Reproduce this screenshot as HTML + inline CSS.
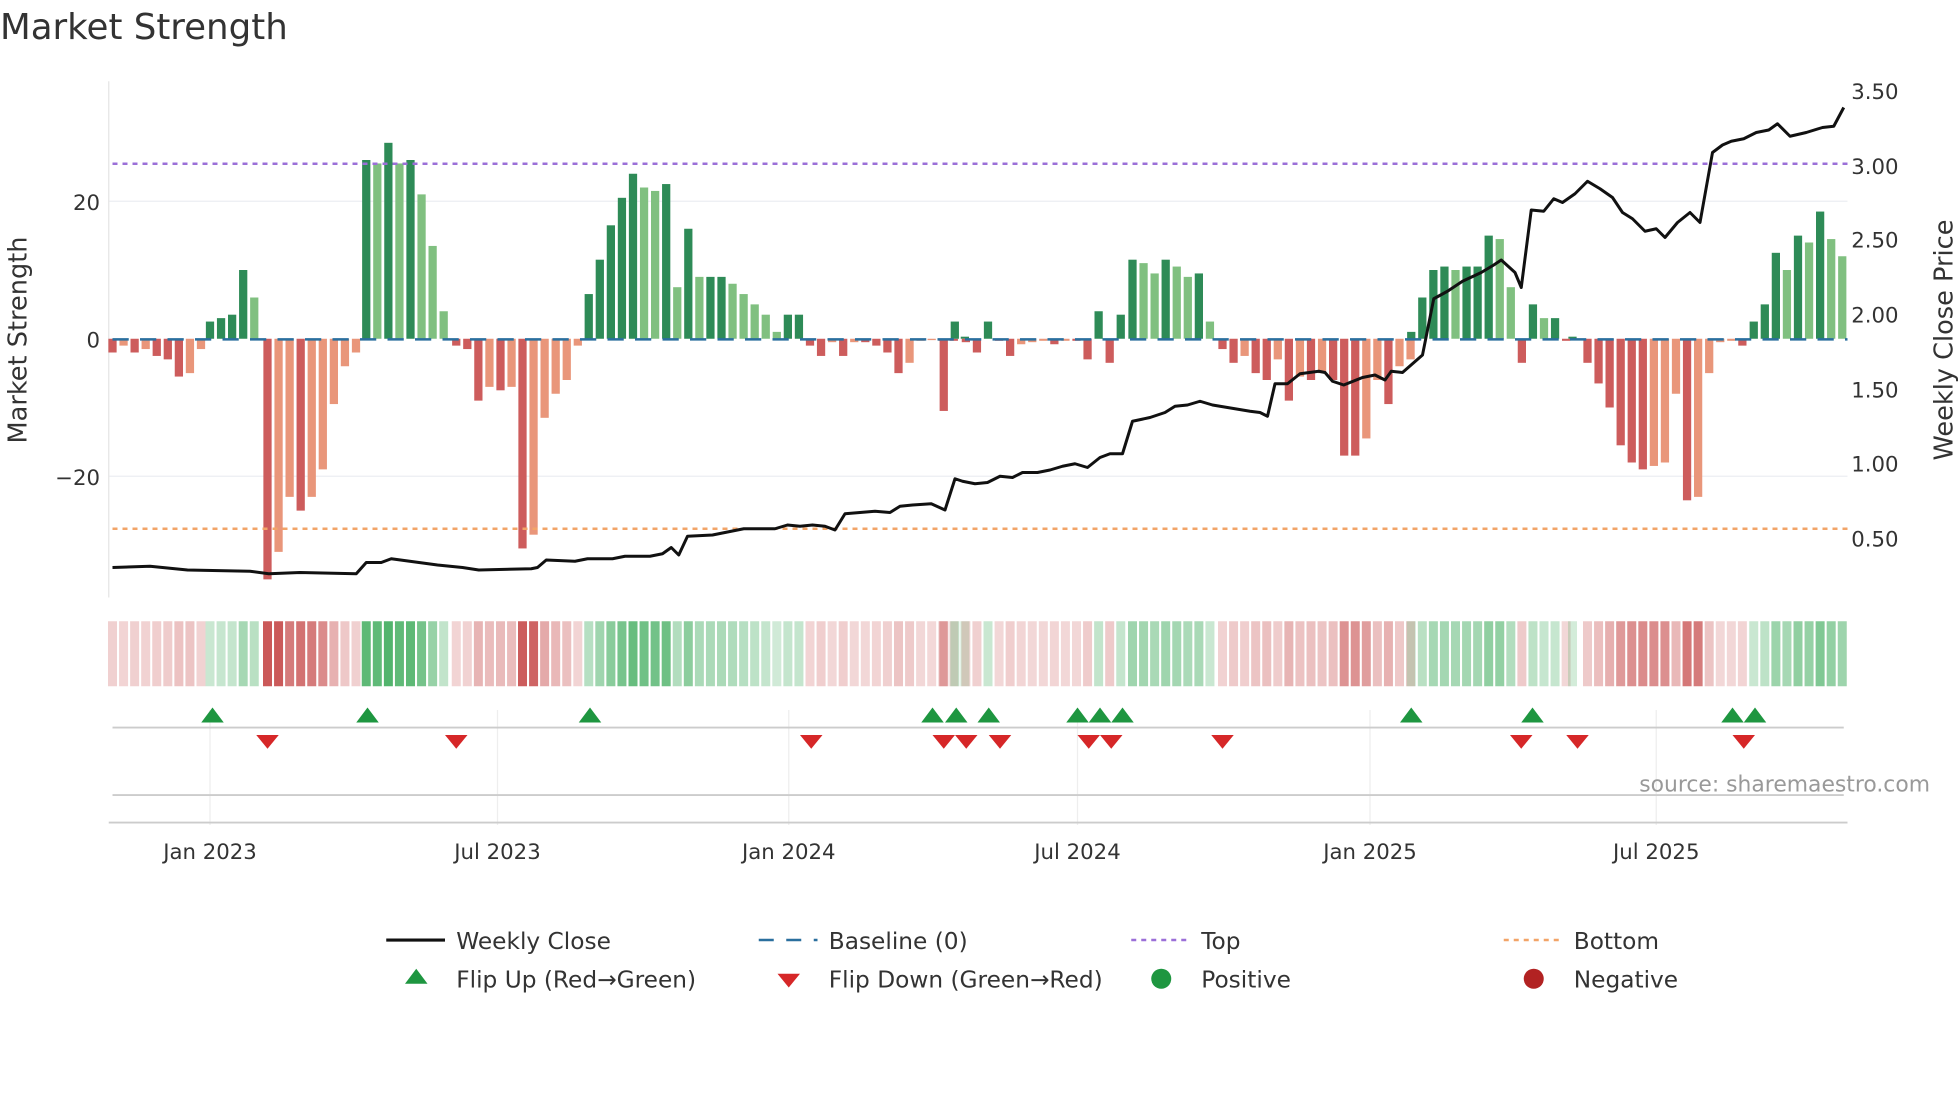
<!DOCTYPE html>
<html><head><meta charset="utf-8"><style>
html,body{margin:0;padding:0;background:#fff;width:1960px;height:1102px;overflow:hidden}
svg{display:block;font-family:"DejaVu Sans","Liberation Sans",sans-serif}
</style></head><body>
<svg id="s" width="1960" height="1102" viewBox="0 0 1568 881.6" xmlns="http://www.w3.org/2000/svg">
<rect width="1568" height="882" fill="#fff"/>
<text x="0" y="31" font-size="28.5" fill="#333">Market Strength</text>
<g stroke="#eceef2" stroke-width="1">
<line x1="87" y1="161" x2="1478" y2="161"/><line x1="87" y1="381" x2="1478" y2="381"/>
</g>
<line x1="87" y1="65" x2="87" y2="478" stroke="#e5e5e5"/>
<g id="bars"></g>
<line x1="90" y1="271.5" x2="1478" y2="271.5" stroke="#2a6f9e" stroke-width="2" stroke-dasharray="13,9"/>
<line x1="90" y1="131" x2="1478" y2="131" stroke="#9b6fd8" stroke-width="2" stroke-dasharray="4,4"/>
<line x1="90" y1="423" x2="1478" y2="423" stroke="#f2a468" stroke-width="2" stroke-dasharray="4,4"/>
<polyline id="price" fill="none" stroke="#111" stroke-width="2.4" stroke-linejoin="round"/>
<g font-size="17" fill="#333">
<text x="80" y="168" text-anchor="end">20</text>
<text x="80" y="278" text-anchor="end">0</text>
<text x="80" y="388" text-anchor="end">−20</text>
<text x="1481" y="79">3.50</text><text x="1481" y="139">3.00</text><text x="1481" y="198">2.50</text>
<text x="1481" y="258">2.00</text><text x="1481" y="318">1.50</text><text x="1481" y="377">1.00</text><text x="1481" y="437">0.50</text>
</g>
<text transform="translate(21,272) rotate(-90)" font-size="20.5" fill="#333" text-anchor="middle">Market Strength</text>
<text transform="translate(1562,272) rotate(-90)" font-size="20.5" fill="#333" text-anchor="middle">Weekly Close Price</text>
<g id="heat"></g>
<g stroke="#eee" id="vg"></g>
<line x1="90" y1="582" x2="1475" y2="582" stroke="#ccc" stroke-width="1.5"/>
<line x1="90" y1="636" x2="1475" y2="636" stroke="#ccc" stroke-width="1.5"/>
<line x1="87" y1="658" x2="1478" y2="658" stroke="#ccc" stroke-width="1.5"/>
<g id="mk"></g>
<text x="1544" y="633" font-size="17.5" fill="#999" text-anchor="end">source: sharemaestro.com</text>
<g font-size="17" fill="#333" text-anchor="middle">
<text x="168" y="687">Jan 2023</text><text x="398" y="687">Jul 2023</text><text x="631" y="687">Jan 2024</text>
<text x="862" y="687">Jul 2024</text><text x="1096" y="687">Jan 2025</text><text x="1325" y="687">Jul 2025</text>
</g>
<g font-size="18.6" fill="#333">
<line x1="309" y1="752" x2="356" y2="752" stroke="#111" stroke-width="2.5"/><text x="365" y="759">Weekly Close</text>
<line x1="607" y1="752" x2="654" y2="752" stroke="#2a6f9e" stroke-width="2" stroke-dasharray="12,10"/><text x="663" y="759">Baseline (0)</text>
<line x1="905" y1="752" x2="950" y2="752" stroke="#9b6fd8" stroke-width="2" stroke-dasharray="4,4"/><text x="961" y="759">Top</text>
<line x1="1203" y1="752" x2="1248" y2="752" stroke="#f2a468" stroke-width="2" stroke-dasharray="4,4"/><text x="1259" y="759">Bottom</text>
<polygon points="333,775 342,787 324,787" fill="#1e9640"/><text x="365" y="790">Flip Up (Red→Green)</text>
<polygon points="622,779 640,779 631,790" fill="#d62728"/><text x="663" y="790">Flip Down (Green→Red)</text>
<circle cx="929" cy="783" r="8" fill="#1e9640"/><text x="961" y="790">Positive</text>
<circle cx="1227" cy="783" r="8" fill="#b22222"/><text x="1259" y="790">Negative</text>
</g>
</svg>
<script>
var segs=[[90,-2,-1,-2,-1.5,-2.5,-3,-5.5,-5,-1.5],[168,2.5,3,3.5,10,6],[214,-35,-31,-23,-25,-23,-19,-9.5,-4,-2],
[293,26,25.5,28.5,25.5,26,21,13.5,4],[365,-1,-1.5,-9,-7,-7.5,-7],[418,-30.5,-28.5,-11.5,-8,-6,-1],
[471,6.5,11.5,16.5,20.5,24,22,21.5,22.5,7.5,16,9,9,9,8,6.5,5,3.5,1,3.5,3.5],
[648,-1,-2.5,-0.5,-2.5,-0.5,-0.5,-1,-2,-5,-3.5,-0.3,-0.2,-0.3,-0.3,0.3],[755,-10.5,2.5,-0.5,-2,2.5,-0.3,-2.5,-0.8,-0.5,-0.3,-0.8,-0.3,-0.3,-3,4,-3.5,3.5],
[906,11.5,11,9.5,11.5,10.5,9,9.5,2.5],[978,-1.5,-3.5,-2.5,-5,-6,-3,-9,-5.5,-6,-5,-6,-17,-17,-14.5,-6,-9.5,-4,-3],
[1129,1,6,10,10.5,10,10.5,10.5,15,14.5,7.5,-3.5,5,3,3,-0.3],[1258,0.3],[1270,-3.5,-6.5,-10,-15.5,-18,-19,-18.5,-18,-8,-23.5,-23,-5,-0.5,-0.3,-1],
[1403,2.5,5,12.5,10,15,14,18.5,14.5,12]];
var P=8.85,bars=[];segs.forEach(function(s){for(var k=1;k<s.length;k++)bars.push([s[0]+(k-1)*P,s[k]]);});
var b='',h='',prev=0;
bars.forEach(function(d){var x=d[0],v=d[1],y0=271,hh=Math.abs(v)*5.5,c;
 if(v>=0)c=(v>=prev)?'#2e8b57':'#80c080';else c=(v<=prev)?'#cd5c5c':'#e9967a';
 b+='<rect x="'+(x-3.3)+'" y="'+(v>=0?y0-hh:y0)+'" width="6.6" height="'+hh+'" fill="'+c+'"/>';
 var a=Math.min(0.22+Math.abs(v)/30*0.7,0.95);
 var hc=v>=0?'rgba(60,170,90,'+a+')':'rgba(200,80,80,'+a+')';
 h+='<rect x="'+(x-3.6)+'" y="497" width="7.2" height="52" fill="'+hc+'"/>';prev=v;});
document.getElementById('bars').innerHTML=b;document.getElementById('heat').innerHTML=h;
var pts=[[90,454],[120,453],[150,456],[200,457],[215,459],[240,458],[285,459],[293,450],[305,450],[313,447],[350,452],[370,454],[383,456],[425,455],[430,454],[437,448],[460,449],[470,447],[490,447],[500,445],[520,445],[530,443],[537,438],[543,444],[550,429],[570,428],[595,423],[620,423],[630,420],[640,421],[650,420],[660,421],[668,424],[676,411],[700,409],[712,410],[720,405],[730,404],[745,403],[756,408],[764,383],[770,385],[780,387],[790,386],[800,381],[810,382],[818,378],[830,378],[840,376],[850,373],[860,371],[870,374],[880,366],[888,363],[898,363],[906,337],[920,334],[932,330],[940,325],[950,324],[960,321],[970,324],[1000,329],[1008,330],[1014,333],[1020,307],[1030,307],[1040,299],[1055,297],[1060,298],[1066,305],[1075,308],[1090,302],[1100,300],[1108,304],[1113,297],[1122,298],[1138,284],[1147,239],[1158,233],[1170,225],[1185,218],[1195,212],[1201,208],[1212,218],[1217,230],[1225,168],[1235,169],[1243,159],[1250,162],[1260,155],[1270,145],[1280,151],[1290,158],[1298,170],[1306,175],[1316,185],[1325,183],[1332,190],[1342,178],[1352,170],[1360,178],[1370,122],[1378,116],[1385,113],[1395,111],[1405,106],[1415,104],[1422,99],[1432,109],[1445,106],[1458,102],[1467,101],[1475,86]];
document.getElementById('price').setAttribute('points',pts.map(function(p){return p.join(',')}).join(' '));
var m='';[170,294,472,746,765,791,862,880,898,1129,1226,1386,1404].forEach(function(x){m+='<polygon points="'+x+',566 '+(x+9)+',578 '+(x-9)+',578" fill="#1e9640"/>';});
[214,365,649,755,773,800,871,889,978,1217,1262,1395].forEach(function(x){m+='<polygon points="'+(x-9)+',588 '+(x+9)+',588 '+x+',599" fill="#d62728"/>';});
document.getElementById('mk').innerHTML=m;
var g='';[168,398,631,862,1096,1325].forEach(function(x){g+='<line x1="'+x+'" y1="568" x2="'+x+'" y2="660"/>';});
document.getElementById('vg').innerHTML=g;
</script>
</body></html>
